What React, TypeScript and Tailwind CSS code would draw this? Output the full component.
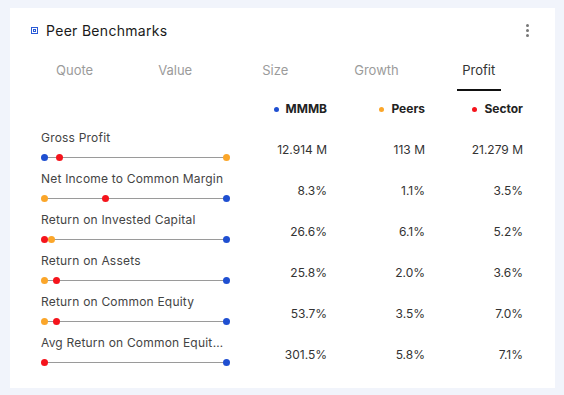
import React from 'react'

const BLUE = '#1f4fd1'
const ORANGE = '#fba62a'
const RED = '#f5141c'

type Row = {
  label: string
  values: [string, string, string]
  // dot positions 0..1 along the track: [mmmb, peers, sector]
  pos: [number | null, number | null, number | null]
}

const ROWS: Row[] = [
  { label: 'Gross Profit', values: ['12.914 M', '113 M', '21.279 M'], pos: [0, 1, 0.083] },
  { label: 'Net Income to Common Margin', values: ['8.3%', '1.1%', '3.5%'], pos: [1, 0, 0.34] },
  { label: 'Return on Invested Capital', values: ['26.6%', '6.1%', '5.2%'], pos: [1, 0.04, 0] },
  { label: 'Return on Assets', values: ['25.8%', '2.0%', '3.6%'], pos: [1, 0, 0.067] },
  { label: 'Return on Common Equity', values: ['53.7%', '3.5%', '7.0%'], pos: [1, 0, 0.067] },
  { label: 'Avg Return on Common Equity (5y)', values: ['301.5%', '5.8%', '7.1%'], pos: [1, null, 0] },
]

const TABS = [
  { label: 'Quote', ml: 'ml-[56px]' },
  { label: 'Value', ml: 'ml-[65px]' },
  { label: 'Size', ml: 'ml-[70px]' },
  { label: 'Growth', ml: 'ml-[66px]' },
]

function Track({ pos }: { pos: Row['pos'] }) {
  const colors = [BLUE, ORANGE, RED]
  return (
    <div className="relative h-[8px] w-[182px] ml-[3px]">
      <div className="absolute left-0 right-0 top-[3.5px] h-px bg-[#9a9a9a]" />
      {pos.map((p, i) =>
        p == null ? null : (
          <span
            key={i}
            className="absolute top-[0.5px] w-[7px] h-[7px] rounded-full"
            style={{ left: p * 182 - 3.5, backgroundColor: colors[i] }}
          />
        ),
      )}
    </div>
  )
}

export default function App() {
  return (
    <div
      className="w-[564px] h-[395px] bg-[#f1f4fb] pt-[8px] pl-[10px]"
      style={{ fontFamily: 'Inter, "Open Sans", sans-serif' }}
    >
      <div className="w-[545px] h-[380px] bg-white relative">
        {/* Header */}
        <div className="flex items-center pt-[8px] pl-[21px] pr-[26px] h-[36px]">
          <span className="w-[7px] h-[7px] border border-[#2a5bd7] flex items-center justify-center">
            <span className="w-[3px] h-[3px] border border-[#2a5bd7]" />
          </span>
          <span className="ml-[8px] text-[14px] text-[#1a1a1a] tracking-[0.3px]">Peer Benchmarks</span>
          <div className="ml-auto flex flex-col gap-[2px] items-center">
            <span className="w-[3px] h-[3px] rounded-full bg-[#777]" />
            <span className="w-[3px] h-[3px] rounded-full bg-[#777]" />
            <span className="w-[3px] h-[3px] rounded-full bg-[#777]" />
          </div>
        </div>

        {/* Tabs */}
        <div className="flex items-start mt-[16px] h-[38px] text-[13px] -ml-[10px]">
          {TABS.map((t) => (
            <span key={t.label} className={`${t.ml} text-[#9b9b9b] pt-[1px] whitespace-nowrap`}>
              {t.label}
            </span>
          ))}
          <div className="ml-[58px] w-[44px] flex flex-col items-center">
            <span className="text-[#333] pt-[1px]">Profit</span>
            <span className="mt-[8px] w-[44px] h-[2px] bg-[#111]" />
          </div>
        </div>

        {/* Legend */}
        <div className="grid grid-cols-[188px_98px_98px_98px] ml-[31px] mt-[2px] text-[12px] font-bold text-[#222]">
          <span />
          {[
            { c: BLUE, t: 'MMMB' },
            { c: ORANGE, t: 'Peers' },
            { c: RED, t: 'Sector' },
          ].map((l) => (
            <span key={l.t} className="flex items-center justify-end">
              <span className="w-[5px] h-[5px] rounded-full mr-[7px]" style={{ backgroundColor: l.c }} />
              {l.t}
            </span>
          ))}
        </div>

        {/* Rows */}
        <div className="ml-[31px] mt-[13px] flex flex-col gap-[11px]">
          {ROWS.map((r) => (
            <div key={r.label} className="grid grid-cols-[188px_98px_98px_98px] items-center h-[30px]">
              <div className="flex flex-col gap-[8px]">
                <span className="text-[12px] text-[#444] tracking-[0.2px] truncate w-[186px] leading-[14px]">
                  {r.label}
                </span>
                <Track pos={r.pos} />
              </div>
              {r.values.map((v, i) => (
                <span key={i} className="text-right text-[12px] text-[#333] pt-[8px]">
                  {v}
                </span>
              ))}
            </div>
          ))}
        </div>
      </div>
    </div>
  )
}
